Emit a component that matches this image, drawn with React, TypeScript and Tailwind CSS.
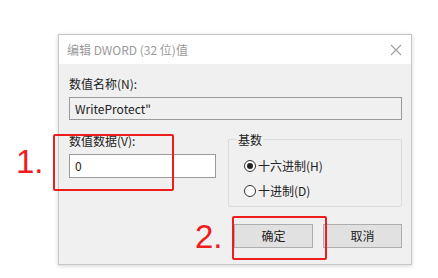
import React from "react";

const font = { fontFamily: '"Noto Sans CJK SC", "Noto Sans", sans-serif' };

function Radio({ checked, label }: { checked: boolean; label: string }) {
  return (
    <div className="flex items-center h-[16px]">
      <div className="w-[12px] h-[12px] rounded-full border border-[#333] bg-white flex items-center justify-center">
        {checked && <div className="w-[6px] h-[6px] rounded-full bg-[#222]" />}
      </div>
      <span className="ml-[2px] text-[12px] text-[#222] leading-[16px]">{label}</span>
    </div>
  );
}

export default function App() {
  return (
    <div className="relative w-[438px] h-[278px] bg-white overflow-hidden" style={font}>
      <div className="pt-[34px] pl-[58px]">
        <div className="w-[354px] h-[231px] border border-[#c8c8c8] bg-[#f0f0f0] shadow-[0_1px_4px_rgba(0,0,0,0.18)] flex flex-col">
          <div className="h-[29px] bg-white flex items-center justify-between pl-[8px] pr-[8px]">
            <span className="text-[12px] text-[#9a9a9a] leading-[16px]">编辑 DWORD (32 位)值</span>
            <svg width="12" height="12" viewBox="0 0 12 12" className="mr-[1px]">
              <path d="M1 1 L11 11 M11 1 L1 11" stroke="#a0a0a0" strokeWidth="1.1" />
            </svg>
          </div>
          <div className="flex flex-col pt-[12px] pl-[10px] pr-[9px]">
            <div className="text-[12px] leading-[16px] text-[#222]">数值名称(N):</div>
            <div className="mt-[5px] h-[23px] border border-[#9a9a9a] bg-[#f0f0f0] flex items-center pl-[5px] text-[12px] text-[#222]">
              WriteProtect"
            </div>
            <div className="flex mt-[13px]">
              <div className="flex flex-col w-[147px]">
                <div className="text-[12px] leading-[16px] text-[#222]">数值数据(V):</div>
                <div className="mt-[5px] h-[24px] border border-[#9a9a9a] bg-white flex items-center pl-[5px] text-[12px] text-[#222]">
                  0
                </div>
              </div>
              <div className="ml-[12px] flex-1 mt-[6px] h-[68px] border border-[#dcdcdc] rounded-[2px] relative">
                <span className="absolute -top-[8px] left-[8px] bg-[#f0f0f0] px-[1px] text-[12px] leading-[16px] text-[#222]">基数</span>
                <div className="flex flex-col gap-[9px] pt-[18px] pl-[15px]">
                  <Radio checked label="十六进制(H)" />
                  <Radio checked={false} label="十进制(D)" />
                </div>
              </div>
            </div>
            <div className="flex justify-end gap-[10px] mt-[17px]">
              <button className="w-[79px] h-[24px] bg-[#e1e1e1] border border-[#adadad] text-[12px] text-[#222]">确定</button>
              <button className="w-[79px] h-[24px] bg-[#e1e1e1] border border-[#adadad] text-[12px] text-[#222]">取消</button>
            </div>
          </div>
        </div>
      </div>

      <div className="absolute left-[53px] top-[134px] w-[121px] h-[57px] border-2 border-[#ee1c1c] rounded-[2px]" />
      <div className="absolute left-[232px] top-[216px] w-[95px] h-[44px] border-2 border-[#ee1c1c] rounded-[2px]" />
      <div className="absolute left-[16px] top-[143px] text-[33px] leading-[38px] text-[#ee1c1c]" style={{ fontFamily: '"Liberation Sans", Arial, sans-serif' }}>1.</div>
      <div className="absolute left-[195px] top-[218px] text-[33px] leading-[38px] text-[#ee1c1c]" style={{ fontFamily: '"Liberation Sans", Arial, sans-serif' }}>2.</div>
    </div>
  );
}
